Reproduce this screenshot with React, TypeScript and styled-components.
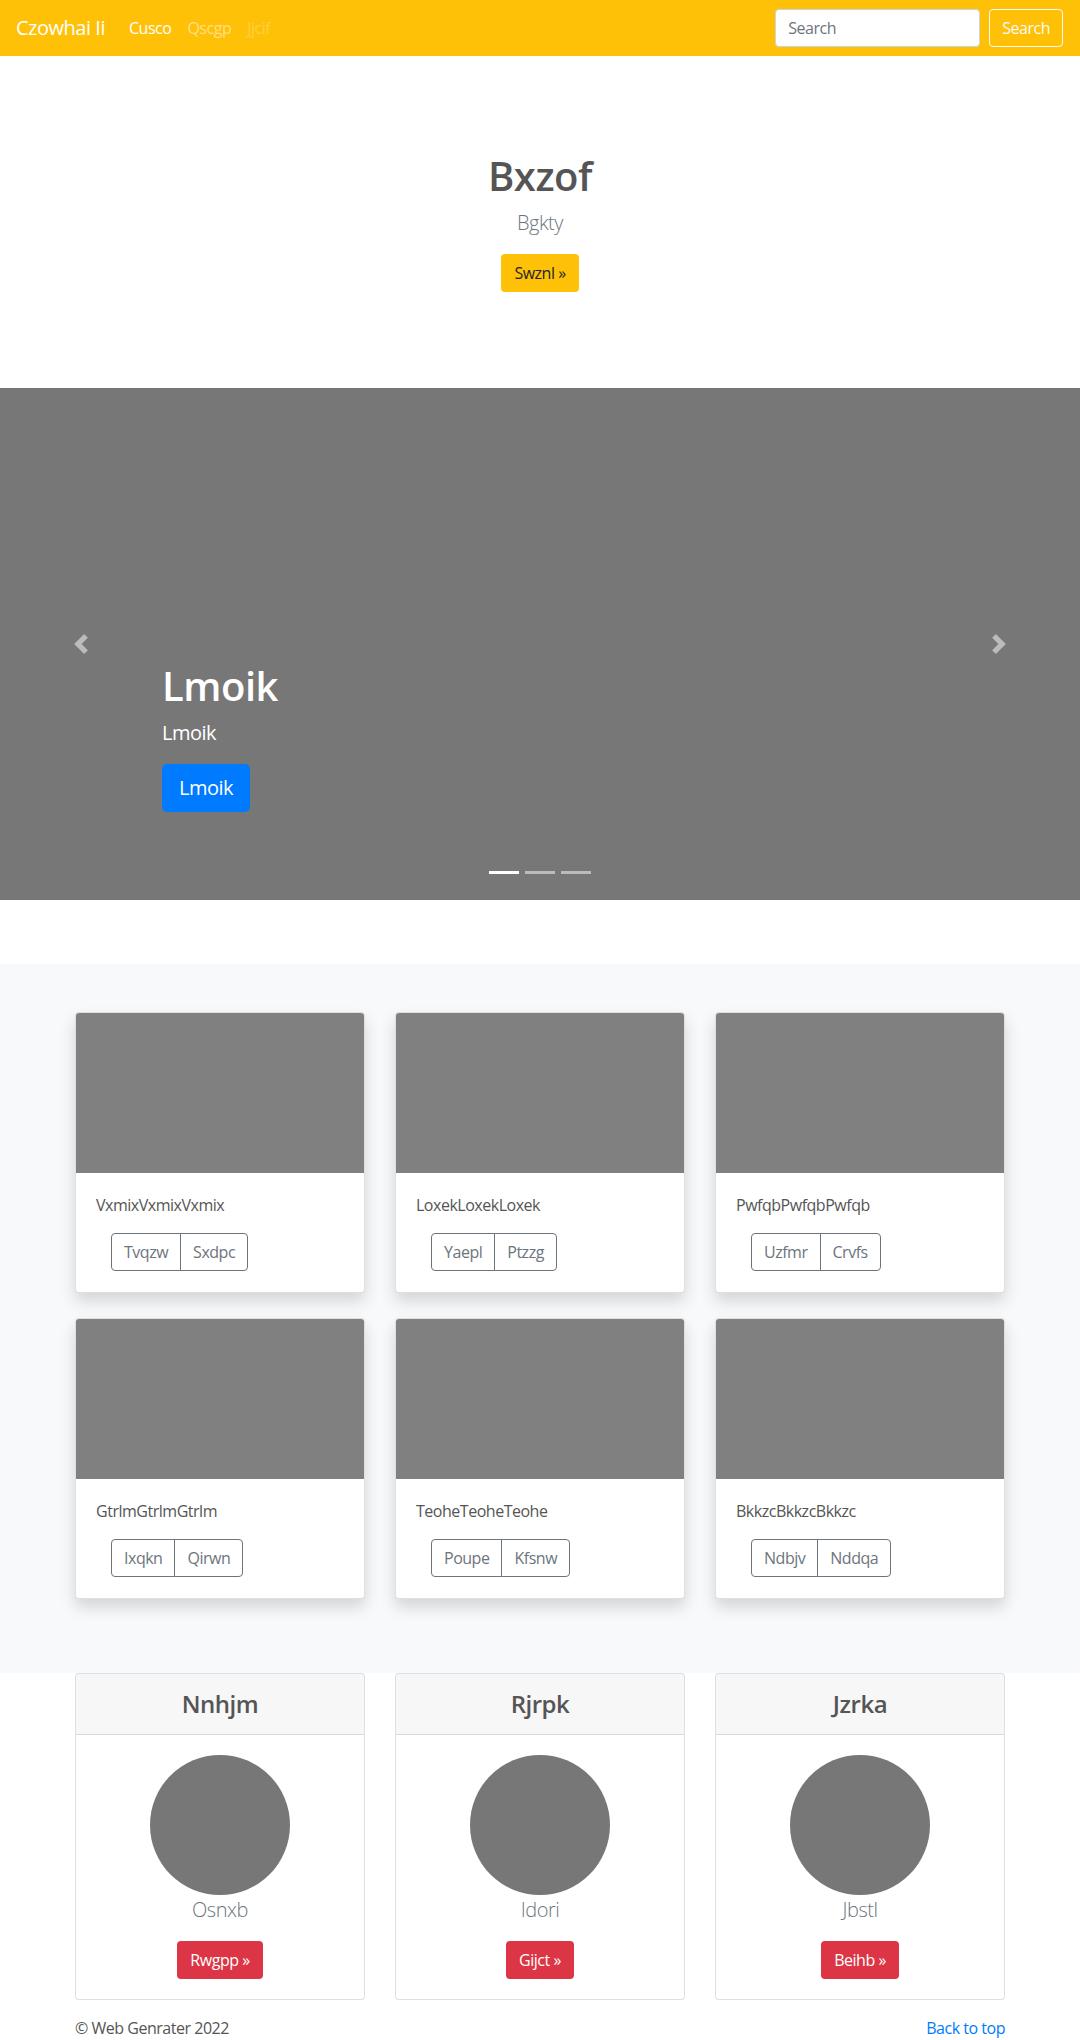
import React from "react";
import styled, { createGlobalStyle } from "styled-components";

const Global = createGlobalStyle`
  html, body { margin: 0; padding: 0; }
  body {
    font-family: "Segoe UI", "Open Sans", "Noto Sans", sans-serif;
    font-size: 16px;
    line-height: 1.5;
    letter-spacing: -0.03em;
    color: #555;
    background: #fff;
  }
  * { box-sizing: border-box; }
  button, input { letter-spacing: -0.03em; }
`;

const Navbar = styled.nav`
  height: 56px;
  background: #ffc107;
  display: flex;
  align-items: center;
  padding: 0 17px 0 16px;
`;

const Brand = styled.a`
  font-size: 20px;
  line-height: 30px;
  color: #fff;
  margin-right: 16px;
  text-decoration: none;
`;

const NavLinks = styled.div`
  display: flex;
  flex: 1;
`;

const NavLink = styled.a<{ $state: "active" | "normal" | "disabled" }>`
  padding: 8px;
  line-height: 24px;
  text-decoration: none;
  color: ${(p) =>
    p.$state === "active"
      ? "#fff"
      : p.$state === "normal"
      ? "rgba(255,255,255,.5)"
      : "rgba(255,255,255,.25)"};
`;

const SearchForm = styled.form`
  display: flex;
  align-items: center;
  gap: 9px;
`;

const SearchInput = styled.input`
  width: 205px;
  height: 38px;
  padding: 6px 12px;
  font: inherit;
  color: #495057;
  border: 1px solid #ced4da;
  border-radius: 4px;
  background: #fff;
  &::placeholder { color: #6c757d; }
`;

const OutlineLightBtn = styled.button`
  height: 38px;
  padding: 6px 12px;
  font: inherit;
  color: #f8f9fa;
  background: transparent;
  border: 1px solid #f8f9fa;
  border-radius: 4px;
`;

const Hero = styled.section`
  text-align: center;
  padding: 96px 0 96px;
`;

const HeroTitle = styled.h1`
  margin: 0 0 8px;
  font-size: 40px;
  font-weight: 600;
  line-height: 48px;
  color: #555;
`;

const Lead = styled.p`
  margin: 0 0 16px;
  font-size: 20px;
  font-weight: 300;
  line-height: 30px;
  color: #6c757d;
`;

const Btn = styled.a<{ $variant: "warning" | "danger" | "primary"; $lg?: boolean }>`
  display: inline-block;
  text-decoration: none;
  border-radius: ${(p) => (p.$lg ? "5px" : "4px")};
  padding: ${(p) => (p.$lg ? "8px 16px" : "6px 12px")};
  font-size: ${(p) => (p.$lg ? "20px" : "16px")};
  line-height: ${(p) => (p.$lg ? "30px" : "24px")};
  border: 1px solid transparent;
  background: ${(p) =>
    p.$variant === "warning" ? "#ffc107" : p.$variant === "danger" ? "#dc3545" : "#007bff"};
  color: ${(p) => (p.$variant === "warning" ? "#212529" : "#fff")};
`;

const Carousel = styled.section`
  position: relative;
  height: 512px;
  background: #777;
  margin-bottom: 64px;
`;

const Caption = styled.div`
  position: absolute;
  left: 162px;
  right: 162px;
  bottom: 88px;
  color: #fff;
`;

const CaptionTitle = styled.h1`
  margin: 0 0 8px;
  font-size: 40px;
  font-weight: 600;
  line-height: 48px;
`;

const CaptionText = styled.p`
  margin: 0 0 16px;
  font-size: 20px;
  line-height: 30px;
`;

const Control = styled.a<{ $side: "left" | "right" }>`
  position: absolute;
  top: 0;
  bottom: 0;
  ${(p) => p.$side}: 0;
  width: 15%;
  display: flex;
  align-items: center;
  justify-content: center;
  opacity: 0.5;
`;

const Indicators = styled.ol`
  position: absolute;
  left: 0;
  right: 0;
  bottom: 26px;
  margin: 0;
  padding: 0;
  list-style: none;
  display: flex;
  justify-content: center;
`;

const Indicator = styled.li<{ $active?: boolean }>`
  width: 30px;
  height: 3px;
  margin: 0 3px;
  background: #fff;
  opacity: ${(p) => (p.$active ? 1 : 0.5)};
`;

const Album = styled.section`
  background: #f8f9fa;
  padding: 48px 0 49px;
`;

const Container = styled.div`
  width: 960px;
  margin: 0 auto;
  padding: 0 15px;
`;

const Grid = styled.div`
  display: grid;
  grid-template-columns: repeat(3, 1fr);
  column-gap: 30px;
`;

const Card = styled.div`
  background: #fff;
  border: 1px solid rgba(0, 0, 0, 0.125);
  border-radius: 4px;
  overflow: hidden;
`;

const AlbumCard = styled(Card)`
  box-shadow: 0 8px 16px rgba(0, 0, 0, 0.15);
  margin-bottom: 25px;
`;

const Thumb = styled.div`
  height: 160px;
  background: #808080;
`;

const CardBody = styled.div<{ $center?: boolean }>`
  padding: 20px;
  text-align: ${(p) => (p.$center ? "center" : "left")};
`;

const AlbumBody = styled(CardBody)`
  padding-bottom: 21px;
`;

const CardText = styled.p`
  margin: 0 0 16px;
  color: #555;
`;

const BtnGroup = styled.div`
  display: flex;
  width: max-content;
  margin-left: 15px;
`;

const OutlineBtn = styled.button`
  font: inherit;
  height: 38px;
  padding: 6px 12px;
  color: #6c757d;
  background: transparent;
  border: 1px solid #6c757d;
  &:first-child { border-radius: 4px 0 0 4px; }
  &:last-child { border-radius: 0 4px 4px 0; margin-left: -1px; }
`;

const CardHeader = styled.div`
  padding: 16px 20px;
  background: rgba(0, 0, 0, 0.03);
  border-bottom: 1px solid rgba(0, 0, 0, 0.125);
  text-align: center;
`;

const CardTitle = styled.h4`
  margin: 0;
  font-size: 24px;
  line-height: 28px;
  font-weight: 600;
  color: #555;
`;

const Avatar = styled.div`
  width: 140px;
  height: 140px;
  border-radius: 50%;
  background: #777;
  margin: 0 auto;
`;

const PersonName = styled(Lead)`
  margin: 0 0 16px;
`;

const Footer = styled.footer`
  padding: 16px 0 24px;
`;

const FooterRow = styled.div`
  display: flex;
  justify-content: space-between;
`;

const FooterText = styled.p`
  margin: 0;
  color: #555;
`;

const BackLink = styled.a`
  color: #007bff;
  text-decoration: none;
`;

const PrevIcon = () => (
  <svg width="20" height="20" viewBox="0 0 8 8" fill="#fff">
    <path d="M5.25 0l-4 4 4 4 1.5-1.5L4.25 4l2.5-2.5L5.25 0z" />
  </svg>
);

const NextIcon = () => (
  <svg width="20" height="20" viewBox="0 0 8 8" fill="#fff">
    <path d="M2.75 0l-1.5 1.5L3.75 4l-2.5 2.5L2.75 8l4-4-4-4z" />
  </svg>
);

const albumItems = [
  { text: "VxmixVxmixVxmix", a: "Tvqzw", b: "Sxdpc" },
  { text: "LoxekLoxekLoxek", a: "Yaepl", b: "Ptzzg" },
  { text: "PwfqbPwfqbPwfqb", a: "Uzfmr", b: "Crvfs" },
  { text: "GtrlmGtrlmGtrlm", a: "Ixqkn", b: "Qirwn" },
  { text: "TeoheTeoheTeohe", a: "Poupe", b: "Kfsnw" },
  { text: "BkkzcBkkzcBkkzc", a: "Ndbjv", b: "Nddqa" },
];

const people = [
  { title: "Nnhjm", name: "Osnxb", btn: "Rwgpp »" },
  { title: "Rjrpk", name: "Idori", btn: "Gijct »" },
  { title: "Jzrka", name: "Jbstl", btn: "Beihb »" },
];

export default function App() {
  return (
    <>
      <Global />
      <Navbar>
        <Brand href="#">Czowhai Ii</Brand>
        <NavLinks>
          <NavLink $state="active" href="#">Cusco</NavLink>
          <NavLink $state="normal" href="#">Qscgp</NavLink>
          <NavLink $state="disabled" href="#">Jjcif</NavLink>
        </NavLinks>
        <SearchForm onSubmit={(e) => e.preventDefault()}>
          <SearchInput placeholder="Search" />
          <OutlineLightBtn type="submit">Search</OutlineLightBtn>
        </SearchForm>
      </Navbar>

      <Hero>
        <HeroTitle>Bxzof</HeroTitle>
        <Lead>Bgkty</Lead>
        <Btn $variant="warning" href="#">Swznl »</Btn>
      </Hero>

      <Carousel>
        <Caption>
          <CaptionTitle>Lmoik</CaptionTitle>
          <CaptionText>Lmoik</CaptionText>
          <Btn $variant="primary" $lg href="#">Lmoik</Btn>
        </Caption>
        <Control $side="left" href="#"><PrevIcon /></Control>
        <Control $side="right" href="#"><NextIcon /></Control>
        <Indicators>
          <Indicator $active />
          <Indicator />
          <Indicator />
        </Indicators>
      </Carousel>

      <Album>
        <Container>
          <Grid>
            {albumItems.map((it) => (
              <AlbumCard key={it.text}>
                <Thumb />
                <AlbumBody>
                  <CardText>{it.text}</CardText>
                  <BtnGroup>
                    <OutlineBtn>{it.a}</OutlineBtn>
                    <OutlineBtn>{it.b}</OutlineBtn>
                  </BtnGroup>
                </AlbumBody>
              </AlbumCard>
            ))}
          </Grid>
        </Container>
      </Album>

      <Container>
        <Grid>
          {people.map((p) => (
            <Card key={p.title}>
              <CardHeader>
                <CardTitle>{p.title}</CardTitle>
              </CardHeader>
              <CardBody $center>
                <Avatar />
                <PersonName>{p.name}</PersonName>
                <Btn $variant="danger" href="#">{p.btn}</Btn>
              </CardBody>
            </Card>
          ))}
        </Grid>
        <Footer>
          <FooterRow>
            <FooterText>© Web Genrater 2022</FooterText>
            <BackLink href="#">Back to top</BackLink>
          </FooterRow>
        </Footer>
      </Container>
    </>
  );
}
